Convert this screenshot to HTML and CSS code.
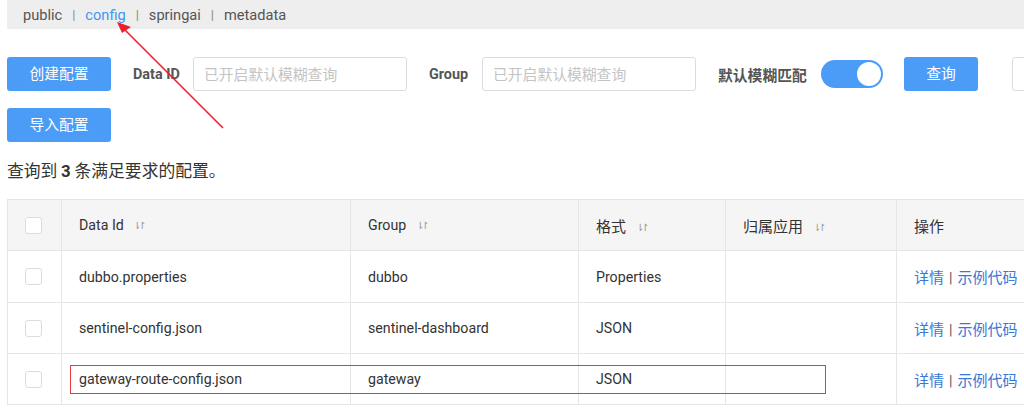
FILE: index.html
```html
<!DOCTYPE html>
<html lang="zh-CN">
<head>
<meta charset="utf-8">
<title>配置列表</title>
<link rel="stylesheet" href="styles.css">
</head>
<body>
<div class="page">
  <div class="ns-bar">
    <span class="ns">public</span><span class="sep">|</span><span class="ns active">config</span><span class="sep">|</span><span class="ns">springai</span><span class="sep">|</span><span class="ns">metadata</span>
  </div>

  <div class="toolbar">
    <button class="btn primary btn-create">创建配置</button>
    <label class="lbl lbl-dataid">Data ID</label>
    <input class="inp" placeholder="已开启默认模糊查询">
    <label class="lbl lbl-group">Group</label>
    <input class="inp" placeholder="已开启默认模糊查询">
    <label class="lbl lbl-fuzzy">默认模糊匹配</label>
    <span class="switch"><span class="knob"></span></span>
    <button class="btn primary btn-query">查询</button>
    <input class="inp inp-more">
  </div>
  <div class="toolbar2">
    <button class="btn primary btn-create">导入配置</button>
  </div>

  <div class="summary">查询到 <b>3</b> 条满足要求的配置。</div>

  <div class="table-wrap">
    <table class="tbl">
      <colgroup>
        <col class="c-check"><col class="c-id"><col class="c-group"><col class="c-fmt"><col class="c-app"><col class="c-op">
      </colgroup>
      <thead>
        <tr class="row-h">
          <th class="cell-check"><span class="chk"></span></th>
          <th>Data Id <span class="sort">⇂↾</span></th>
          <th>Group <span class="sort">⇂↾</span></th>
          <th class="cjk">格式 <span class="sort">⇂↾</span></th>
          <th class="cjk">归属应用 <span class="sort">⇂↾</span></th>
          <th class="cjk">操作</th>
        </tr>
      </thead>
      <tbody>
        <tr class="row-a">
          <td class="cell-check"><span class="chk"></span></td>
          <td>dubbo.properties</td>
          <td>dubbo</td>
          <td>Properties</td>
          <td></td>
          <td class="ops"><a>详情</a><span class="opsep">|</span><a>示例代码</a></td>
        </tr>
        <tr class="row-b">
          <td class="cell-check"><span class="chk"></span></td>
          <td>sentinel-config.json</td>
          <td>sentinel-dashboard</td>
          <td>JSON</td>
          <td></td>
          <td class="ops"><a>详情</a><span class="opsep">|</span><a>示例代码</a></td>
        </tr>
        <tr class="row-b">
          <td class="cell-check"><span class="chk"></span></td>
          <td>gateway-route-config.json</td>
          <td>gateway</td>
          <td>JSON</td>
          <td></td>
          <td class="ops"><a>详情</a><span class="opsep">|</span><a>示例代码</a></td>
        </tr>
      </tbody>
    </table>
    <div class="highlight"></div>
  </div>

  <svg class="arrow" width="1024" height="412" viewBox="0 0 1024 412">
    <line x1="223" y1="128" x2="124" y2="29" stroke="#e8212a" stroke-width="1.6"/>
    <polygon points="117,22 131,27 122,33" fill="#e8212a"/>
  </svg>
</div>
</body>
</html>
```

FILE: styles.css
```css
* { box-sizing: border-box; }
html, body { margin: 0; padding: 0; background: #fff; }
body {
  font-family: Roboto, "Noto Sans CJK SC", "PingFang SC", sans-serif;
  color: #333;
  font-size: 14px;
}
.page { position: relative; width: 1024px; height: 412px; overflow: hidden; }

.ns-bar {
  margin-left: 7px;
  height: 29px;
  background: #eeeeee;
  display: flex;
  align-items: center;
  padding-left: 16px;
  font-size: 14.6px;
  color: #555;
}
.ns.active { color: #3f96f5; }
.sep { color: #888; margin: 0 10px; font-size: 13px; }

.toolbar {
  display: flex;
  align-items: center;
  margin-top: 28px;
  padding-left: 7px;
  height: 34px;
  white-space: nowrap;
}
.toolbar2 { margin-top: 17px; padding-left: 7px; height: 34px; display: flex; }

.btn {
  border: none;
  border-radius: 3px;
  height: 34px;
  font-family: "Noto Sans CJK SC", sans-serif;
  font-size: 14.8px;
  padding: 0 0 3px;
  cursor: pointer;
  flex: none;
}
.btn.primary { background: #4a9cf6; color: #fff; }
.btn-create { width: 104px; }
.btn-query { width: 74px; margin-left: 21px; }

.lbl {
  font-weight: bold;
  color: #555;
  font-size: 14.4px;
  flex: none;
}
.lbl-dataid { margin-left: 22px; width: 60px; }
.lbl-group { margin-left: 22px; width: 53px; }
.lbl-fuzzy { margin-left: 22px; width: 103px; font-family: "Noto Sans CJK SC", sans-serif; font-size: 14.8px; }

.inp {
  width: 214px;
  height: 34px;
  border: 1px solid #dcdcdc;
  border-radius: 3px;
  padding: 0 10px 2px;
  font-family: "Noto Sans CJK SC", sans-serif;
  font-size: 14.8px;
  color: #333;
  outline: none;
  flex: none;
}
.inp::placeholder { color: #c4c4c4; }
.inp-more { margin-left: 34px; width: 120px; }

.switch {
  position: relative;
  width: 62px;
  height: 28px;
  border-radius: 14px;
  background: #4a9cf6;
  flex: none;
}
.knob {
  position: absolute;
  right: 2px;
  top: 2px;
  width: 24px;
  height: 24px;
  border-radius: 50%;
  background: #fff;
}

.summary {
  margin-top: 16px;
  padding-left: 7px;
  height: 24px;
  line-height: 24px;
  font-family: "Noto Sans CJK SC", sans-serif;
  font-size: 16.8px;
  color: #333;
}
.summary b { font-family: Roboto, sans-serif; font-weight: bold; }

.table-wrap { position: relative; margin-top: 17px; margin-left: 7px; }
.tbl {
  border-collapse: collapse;
  table-layout: fixed;
  width: 1080px;
}
.c-check { width: 54px; }
.c-id { width: 289px; }
.c-group { width: 228px; }
.c-fmt { width: 147px; }
.c-app { width: 171px; }
.c-op { width: 191px; }

.tbl th, .tbl td {
  border: 1px solid #e6e6e6;
  text-align: left;
  padding: 0 0 0 17px;
  font-weight: normal;
  color: #333;
  font-size: 14.2px;
  white-space: nowrap;
}
.tbl th { background: #f5f5f5; }
.row-h { height: 51px; }
.row-a { height: 52px; }
.row-b { height: 51px; }
.tbl .cjk { font-size: 15px; }
.tbl .cell-check { padding: 0 0 0 17px; }
.sort { font-size: 10px; color: #999; margin-left: 6px; letter-spacing: -3px; vertical-align: 1px; }
.chk {
  display: block;
  width: 17px;
  height: 17px;
  border: 1px solid #dcdcdc;
  border-radius: 3px;
  background: #fff;
}
.ops { font-size: 15px !important; }
.ops a { color: #3a78d3; }
.opsep { color: #555; margin: 0 5px; font-size: 14px; }

.highlight {
  position: absolute;
  left: 63px;
  top: 166px;
  width: 756px;
  height: 29px;
  border: 1.5px solid #e5383f;
  pointer-events: none;
}

.arrow { position: absolute; left: 0; top: 0; pointer-events: none; }
```
